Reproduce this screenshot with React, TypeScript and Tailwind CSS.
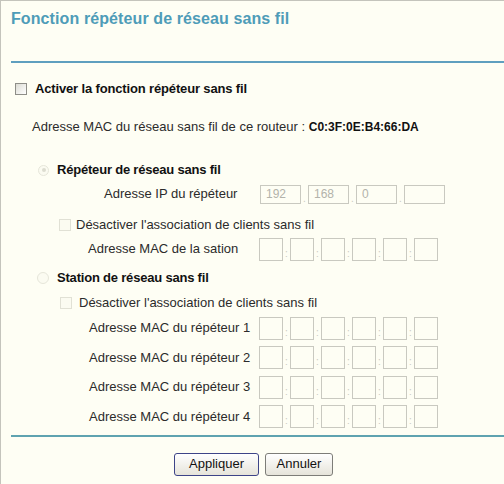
import React from 'react';

const font = { fontFamily: '"Liberation Sans", Arial, sans-serif' };

const IpBox = ({ value }: { value?: string }) => (
  <div className="w-[41px] h-[19px] border border-[#c9c9c0] text-[12px] leading-[17px] pl-[5px] text-[#b3b3ab]">
    {value}
  </div>
);

const MacBoxes = () => (
  <div className="flex items-end">
    {[0, 1, 2, 3, 4, 5].map((i) => (
      <React.Fragment key={i}>
        {i > 0 && (
          <span className="w-[7px] text-center text-[10px] leading-[14px] text-[#c9c9c0]">:</span>
        )}
        <div className="w-[24px] h-[23px] border border-[#c9c9c0]" />
      </React.Fragment>
    ))}
  </div>
);

const FadedCheckbox = () => (
  <div className="w-[12px] h-[12px] border border-[#e1e1d5] bg-[#fbfbf1]" />
);

const MacRow = ({ label, pl }: { label: string; pl: string }) => (
  <div className="flex items-center h-[24px]">
    <span className={`w-[258px] ${pl} text-[13px] text-[#2b2b2b]`}>{label}</span>
    <MacBoxes />
  </div>
);

export default function App() {
  return (
    <div
      className="w-[504px] h-[484px] bg-[#fefef4] border-l border-t border-[#c4c4bc] flex flex-col overflow-hidden"
      style={font}
    >
      {/* titre */}
      <div className="h-[60px] pt-[9px] pl-[10px]">
        <h1 className="text-[16px] leading-[18px] font-bold tracking-[0.1px] text-[#4e9cb8]">
          Fonction répéteur de réseau sans fil
        </h1>
      </div>
      <div className="ml-[10px] h-[2px] bg-[#5f9fbf]" />

      {/* activer */}
      <div className="mt-[15px] h-[22px] flex items-center pl-[14px] gap-[8px]">
        <div className="w-[12px] h-[12px] border border-[#8e8e88] bg-gradient-to-br from-[#dcdcd4] to-[#ffffff]" />
        <span className="text-[13px] font-bold tracking-[-0.15px] text-[#111]">
          Activer la fonction répéteur sans fil
        </span>
      </div>

      {/* adresse mac routeur */}
      <div className="mt-[16px] h-[22px] flex items-center pl-[31px] text-[13px] text-[#2b2b2b]">
        Adresse MAC du réseau sans fil de ce routeur :&nbsp;
        <span className="text-[12px] font-bold text-[#111]">C0:3F:0E:B4:66:DA</span>
      </div>

      {/* répéteur */}
      <div className="mt-[21px] h-[22px] flex items-center pl-[37px] gap-[8px]">
        <div className="w-[11px] h-[11px] rounded-full border border-[#e6e6da] bg-[#fbfbf1] flex items-center justify-center">
          <div className="w-[4px] h-[4px] rounded-full bg-[#dcdcd0]" />
        </div>
        <span className="text-[13px] font-bold tracking-[-0.2px] text-[#111]">
          Répéteur de réseau sans fil
        </span>
      </div>

      <div className="mt-[2px] h-[22px] flex items-center">
        <span className="w-[259px] pl-[103px] text-[13px] text-[#2b2b2b]">Adresse IP du répéteur</span>
        <div className="flex items-end">
          <IpBox value="192" />
          <span className="w-[7px] text-center text-[10px] leading-[10px] text-[#c9c9c0]">.</span>
          <IpBox value="168" />
          <span className="w-[7px] text-center text-[10px] leading-[10px] text-[#c9c9c0]">.</span>
          <IpBox value="0" />
          <span className="w-[7px] text-center text-[10px] leading-[10px] text-[#c9c9c0]">.</span>
          <IpBox />
        </div>
      </div>

      <div className="mt-[9px] h-[22px] flex items-center pl-[58px] gap-[5px]">
        <FadedCheckbox />
        <span className="text-[13px] text-[#2b2b2b]">Désactiver l'association de clients sans fil</span>
      </div>

      <div className="mt-[1px]">
        <MacRow label="Adresse MAC de la sation" pl="pl-[87px]" />
      </div>

      {/* station */}
      <div className="mt-[6px] h-[22px] flex items-center pl-[36px] gap-[8px]">
        <div className="w-[12px] h-[12px] rounded-full border border-[#e6e6da] bg-[#fbfbf1]" />
        <span className="text-[13px] font-bold tracking-[-0.2px] text-[#111]">
          Station de réseau sans fil
        </span>
      </div>

      <div className="mt-[3px] h-[22px] flex items-center pl-[59px] gap-[7px]">
        <FadedCheckbox />
        <span className="text-[13px] text-[#2b2b2b]">Désactiver l'association de clients sans fil</span>
      </div>

      <div className="mt-[2px] flex flex-col gap-[5.5px]">
        <MacRow label="Adresse MAC du répéteur 1" pl="pl-[88px]" />
        <MacRow label="Adresse MAC du répéteur 2" pl="pl-[88px]" />
        <MacRow label="Adresse MAC du répéteur 3" pl="pl-[88px]" />
        <MacRow label="Adresse MAC du répéteur 4" pl="pl-[88px]" />
      </div>

      <div className="mt-[6px] ml-[10px] h-[2px] bg-[#5fa3b0]" />

      {/* boutons */}
      <div className="mt-[16px] flex justify-center gap-[6px] pl-[2px]">
        <button className="w-[85px] h-[23px] rounded-[3px] border border-[#3d4488] bg-gradient-to-b from-[#ffffff] to-[#e6e4da] text-[13px] text-[#111]">
          Appliquer
        </button>
        <button className="w-[68px] h-[23px] rounded-[3px] border border-[#7d7d78] bg-gradient-to-b from-[#ffffff] to-[#e6e4da] text-[13px] text-[#111]">
          Annuler
        </button>
      </div>
    </div>
  );
}
